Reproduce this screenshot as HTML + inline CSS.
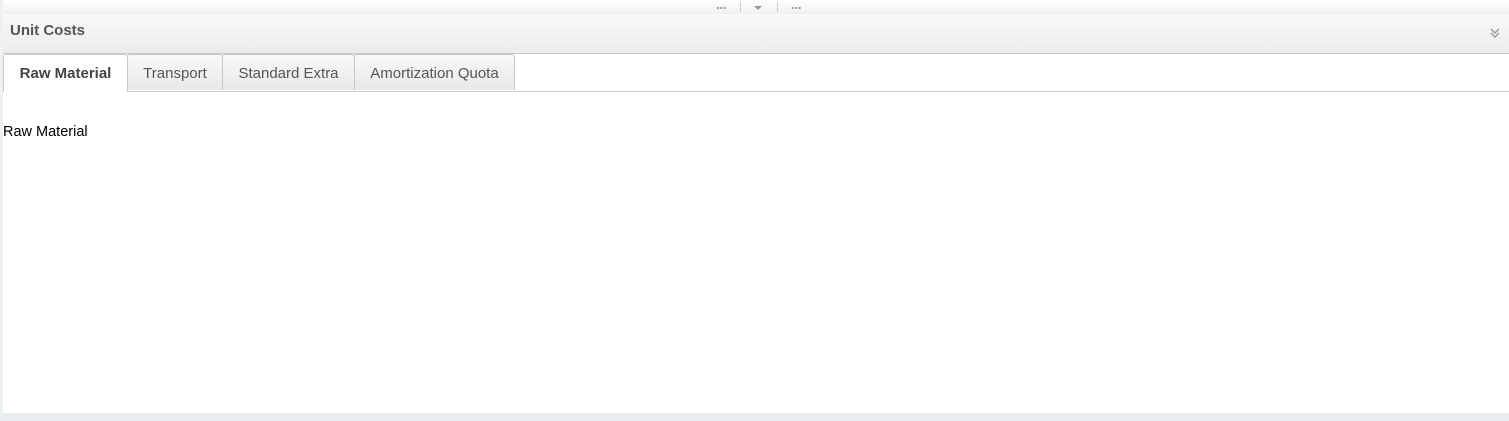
<!DOCTYPE html>
<html><head><style>
body{margin:0;width:1509px;height:421px;position:relative;overflow:hidden;background:#fff;font-family:"Liberation Sans",Arial,sans-serif}
.top{position:absolute;left:0;top:0;width:1509px;height:14px;background:linear-gradient(#fff,#f0f0f0)}
.left{position:absolute;left:0;top:0;width:3px;height:413px;background:#eef0f1}
.hdr{position:absolute;left:3px;top:14px;width:1506px;height:39px;background:linear-gradient(#fafafa,#ebebeb);border-bottom:1px solid #c8c8c8}
.hdr b{position:absolute;left:7px;top:8px;font-size:15px;color:#555}
.tabs{position:absolute;left:3px;top:54px;width:1506px;height:37px;border-bottom:1px solid #ccc}
.tab{position:absolute;top:0;height:36px;box-sizing:border-box;border:1px solid #c8c8c8;border-bottom:none;border-radius:3px 3px 0 0;background:linear-gradient(#f8f8f8,#e9e9e9);font-size:15px;color:#555;text-align:center;line-height:37px}
.tab.a{background:#fff;height:38px;font-weight:bold;color:#444}
.bot{position:absolute;left:0;top:413px;width:1509px;height:8px;background:#e8edf0}
.dots{position:absolute;top:7px;width:10px;height:2px;background:radial-gradient(circle,#999 1px,transparent 1.2px) 0 0/3.5px 2px repeat-x}
</style></head><body>
<div class="top"></div>
<div class="dots" style="left:716px"></div>
<div style="position:absolute;left:740px;top:2px;width:1px;height:10px;background:#ccc"></div>
<div style="position:absolute;left:754px;top:6px;width:0;height:0;border-left:4px solid transparent;border-right:4px solid transparent;border-top:4px solid #999"></div>
<div style="position:absolute;left:777px;top:2px;width:1px;height:10px;background:#ccc"></div>
<div class="dots" style="left:791px"></div>
<div class="left"></div>
<div class="hdr"><b>Unit Costs</b>
<svg style="position:absolute;right:8px;top:13px" width="12" height="12" viewBox="0 0 12 12"><path d="M2 2l4 4 4-4M2 6l4 4 4-4" fill="none" stroke="#999" stroke-width="1.4"/></svg></div>
<div class="tabs">
<div class="tab a" style="left:0;width:125px">Raw Material</div>
<div class="tab" style="left:124px;width:96px">Transport</div>
<div class="tab" style="left:219px;width:133px">Standard Extra</div>
<div class="tab" style="left:351px;width:161px">Amortization Quota</div>
</div>
<div style="position:absolute;left:3px;top:124px;font-size:14.5px;color:#000">Raw Material</div>
<div class="bot"></div>
</body></html>
